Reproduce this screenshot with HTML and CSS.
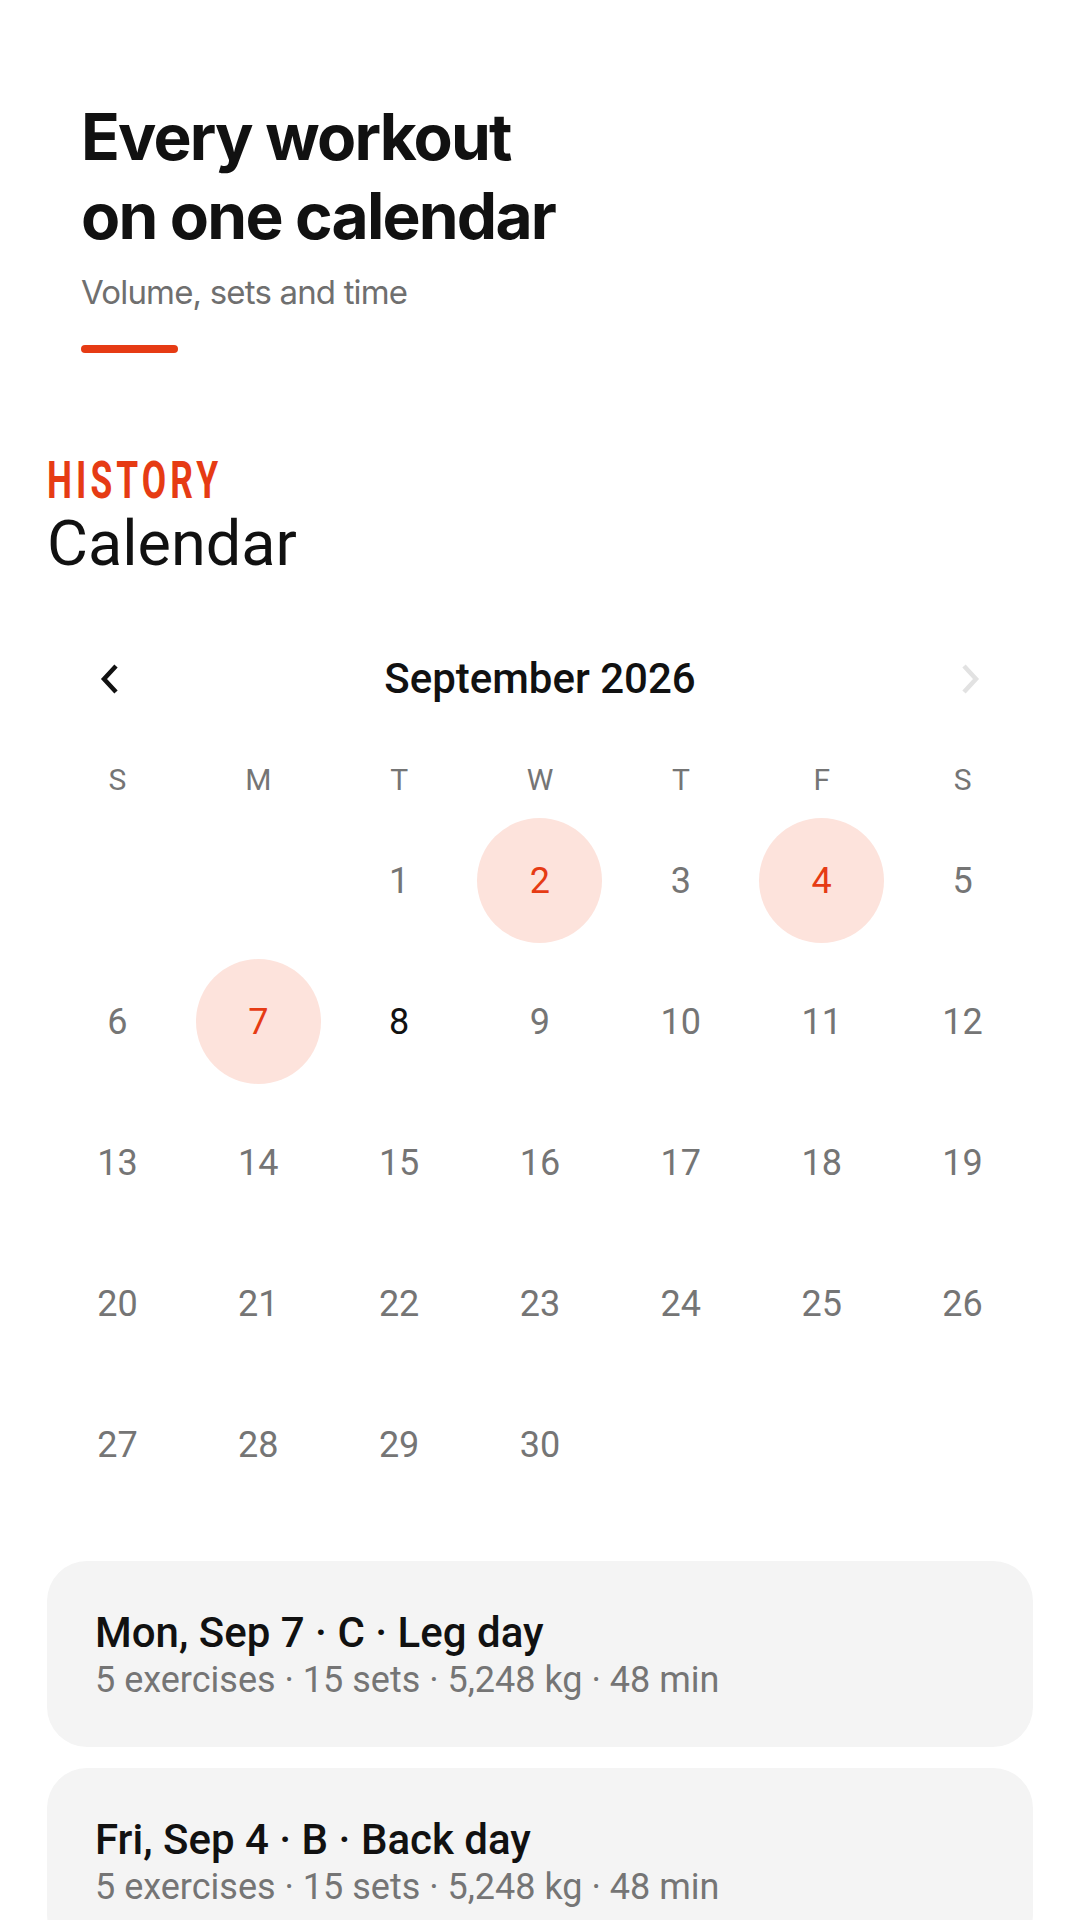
FILE: index.html
```html
<!DOCTYPE html>
<html lang="en">
<head>
<meta charset="utf-8">
<title>History – Calendar</title>
<link rel="stylesheet" href="styles.css">
</head>
<body>
<header class="hero">
  <h1 class="hero-title">Every workout<br>on one calendar</h1>
  <p class="hero-sub">Volume, sets and time</p>
  <div class="hero-bar"></div>
</header>

<main class="page">
  <div class="eyebrow"><span>HISTORY</span></div>
  <h2 class="page-title">Calendar</h2>

  <div class="month-nav">
    <button class="nav-btn" aria-label="Previous month">
      <svg width="24" height="34" viewBox="0 0 24 34"><path d="M18 4 L6 17 L18 30" fill="none" stroke="#111111" stroke-width="4.5"/></svg>
    </button>
    <div class="month-label">September 2026</div>
    <button class="nav-btn" aria-label="Next month">
      <svg width="24" height="34" viewBox="0 0 24 34"><path d="M6 4 L18 17 L6 30" fill="none" stroke="#e2e2e2" stroke-width="4.5"/></svg>
    </button>
  </div>

  <div class="weekdays">
    <div>S</div><div>M</div><div>T</div><div>W</div><div>T</div><div>F</div><div>S</div>
  </div>

  <div class="days">
    <div class="day empty"></div>
    <div class="day empty"></div>
    <div class="day"><span>1</span></div>
    <div class="day"><span class="done">2</span></div>
    <div class="day"><span>3</span></div>
    <div class="day"><span class="done">4</span></div>
    <div class="day"><span>5</span></div>
    <div class="day"><span>6</span></div>
    <div class="day"><span class="done">7</span></div>
    <div class="day"><span class="today">8</span></div>
    <div class="day"><span>9</span></div>
    <div class="day"><span>10</span></div>
    <div class="day"><span>11</span></div>
    <div class="day"><span>12</span></div>
    <div class="day"><span>13</span></div>
    <div class="day"><span>14</span></div>
    <div class="day"><span>15</span></div>
    <div class="day"><span>16</span></div>
    <div class="day"><span>17</span></div>
    <div class="day"><span>18</span></div>
    <div class="day"><span>19</span></div>
    <div class="day"><span>20</span></div>
    <div class="day"><span>21</span></div>
    <div class="day"><span>22</span></div>
    <div class="day"><span>23</span></div>
    <div class="day"><span>24</span></div>
    <div class="day"><span>25</span></div>
    <div class="day"><span>26</span></div>
    <div class="day"><span>27</span></div>
    <div class="day"><span>28</span></div>
    <div class="day"><span>29</span></div>
    <div class="day"><span>30</span></div>
  </div>

  <section class="sessions">
    <article class="session">
      <div class="session-title">Mon, Sep 7 · C · Leg day</div>
      <div class="session-meta">5 exercises · 15 sets · 5,248 kg · 48 min</div>
    </article>
    <article class="session">
      <div class="session-title">Fri, Sep 4 · B · Back day</div>
      <div class="session-meta">5 exercises · 15 sets · 5,248 kg · 48 min</div>
    </article>
  </section>
</main>
</body>
</html>
```

FILE: styles.css
```css
* { box-sizing: border-box; }

html, body {
  margin: 0;
  padding: 0;
  background: #ffffff;
}

body {
  width: 1080px;
  height: 1920px;
  overflow: hidden;
  font-family: Roboto, "Noto Sans", sans-serif;
  color: #111111;
}

.hero {
  padding: 97px 81px 0 81px;
}

.hero-title {
  margin: 0;
  font-family: Inter, Roboto, sans-serif;
  font-weight: 700;
  font-size: 64px;
  line-height: 79px;
  letter-spacing: -0.028em;
  color: #111111;
}

.hero-sub {
  margin: 17px 0 0 0;
  font-family: Inter, Roboto, sans-serif;
  font-weight: 400;
  font-size: 33px;
  line-height: 40px;
  letter-spacing: -0.025em;
  color: #6f6f6f;
}

.hero-bar {
  margin-top: 33px;
  width: 97px;
  height: 8px;
  border-radius: 4px;
  background: #e63b14;
}

.page {
  padding: 0 47px;
}

.eyebrow {
  margin-top: 100px;
  height: 56px;
  font-family: Roboto, sans-serif;
  font-weight: 700;
  font-size: 52px;
  line-height: 56px;
  color: #e63b14;
}

.eyebrow span {
  display: inline-block;
  letter-spacing: 6px;
  transform: scaleX(0.68);
  transform-origin: left center;
}

.page-title {
  margin: 0;
  font-family: Roboto, sans-serif;
  font-weight: 400;
  font-size: 63px;
  line-height: 70px;
  color: #111111;
}

.month-nav {
  margin-top: 60px;
  height: 80px;
  display: grid;
  grid-template-columns: 126px 1fr 126px;
  align-items: center;
}

.nav-btn {
  height: 80px;
  border: 0;
  padding: 0;
  background: transparent;
  display: flex;
  align-items: center;
  justify-content: center;
}

.nav-btn svg { display: block; }

.month-label {
  text-align: center;
  font-family: Roboto, sans-serif;
  font-weight: 500;
  font-size: 42px;
  line-height: 80px;
  color: #111111;
}

.weekdays {
  margin-top: 39px;
  display: grid;
  grid-template-columns: repeat(7, 1fr);
  font-family: Roboto, sans-serif;
  font-weight: 400;
  font-size: 30px;
  line-height: 44px;
  color: #757575;
  text-align: center;
}

.days {
  margin-top: 8px;
  display: grid;
  grid-template-columns: repeat(7, 1fr);
  grid-auto-rows: 141px;
}

.day {
  display: flex;
  align-items: center;
  justify-content: center;
}

.day span {
  width: 125px;
  height: 125px;
  border-radius: 50%;
  display: flex;
  align-items: center;
  justify-content: center;
  font-family: Roboto, sans-serif;
  font-weight: 400;
  font-size: 36px;
  color: #757575;
}

.day span.done {
  background: #fde3dc;
  color: #e63b14;
}

.day span.today {
  color: #111111;
}

.sessions {
  margin-top: 46px;
  display: flex;
  flex-direction: column;
  gap: 21px;
}

.session {
  background: #f4f4f4;
  border-radius: 40px;
  padding: 49px 48px 43px 48px;
}

.session-title {
  font-family: Roboto, sans-serif;
  font-weight: 500;
  font-size: 42px;
  line-height: 46px;
  color: #111111;
}

.session-meta {
  font-family: Roboto, sans-serif;
  font-weight: 400;
  font-size: 36px;
  line-height: 48px;
  color: #757575;
}
```
